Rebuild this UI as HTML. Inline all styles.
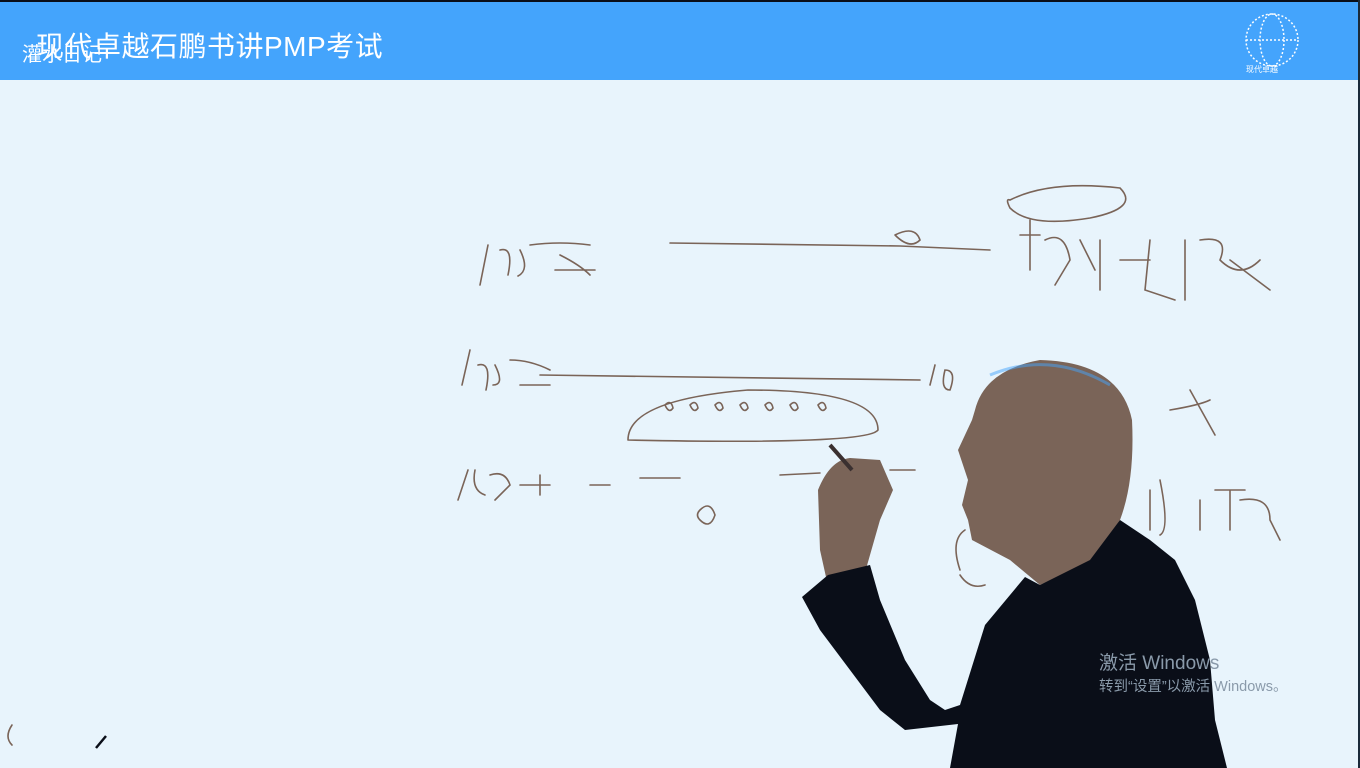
<!DOCTYPE html>
<html><head><meta charset="utf-8"><style>
body{margin:0;width:1360px;height:768px;overflow:hidden;background:#e8f4fc;font-family:"Liberation Sans","Noto Sans CJK SC",sans-serif;position:relative}
.top{position:absolute;left:0;top:0;width:1360px;height:2px;background:#0a0e18}
.hdr{position:absolute;left:0;top:2px;width:1358px;height:78px;background:#44a4fc}
.rs{position:absolute;right:0;top:0;width:2px;height:768px;background:#1a2a3a}
.t{position:absolute;left:36px;top:25px;color:#fff;font-size:28px;letter-spacing:0.5px}
.t2{position:absolute;left:22px;top:38px;color:#fff;font-size:20px}
.wm{position:absolute;left:1099px;top:648px;color:#8a9aaa;font-size:19px}
.wm2{position:absolute;left:1099px;top:675px;color:#8a9aaa;font-size:14.5px}
</style></head><body>
<div class="top"></div><div class="hdr"></div><div class="rs"></div>
<div class="t">现代卓越石鹏书讲PMP考试</div>
<div class="t2">灌水日记</div>
<svg style="position:absolute;left:0;top:0" width="1360" height="768">
<g fill="none" stroke="#fff" stroke-width="1.5">
<circle cx="1272" cy="40" r="26" stroke-dasharray="2 2"/>
<ellipse cx="1272" cy="40" rx="12" ry="26" stroke-dasharray="2 2"/>
<line x1="1246" y1="40" x2="1298" y2="40" stroke-dasharray="2 2"/>
</g>
<text x="1246" y="72" fill="#fff" font-size="8">现代卓越</text>
<g fill="none" stroke="#7a6458" stroke-width="1.6" stroke-linecap="round">
<path d="M480 285 L488 245 M500 250 q14 -4 8 25 M520 250 q10 20 -2 26 M530 245 q30 -4 60 0 M560 255 q20 10 30 20 M555 270 l40 0"/>
<path d="M670 243 L900 246 L990 250"/>
<path d="M895 235 q20 -10 25 5 q-10 10 -25 -5"/>
<path d="M1010 200 q40 -20 110 -12 q20 20 -30 30 q-60 10 -80 -10 q-5 -10 0 -8"/>
<path d="M1020 235 l20 0 M1030 220 l0 50 M1045 240 q20 -10 25 20 l-15 25 M1080 240 l15 30 M1100 240 l0 50 M1120 260 l30 0 M1150 240 l-5 50 l30 10 M1185 240 l0 60 M1200 240 q30 -5 20 20 q20 20 40 0 M1230 260 l40 30"/>
<path d="M462 385 L470 350 M478 365 q14 -4 8 25 M495 365 q10 20 -2 20 M510 360 q20 0 40 10 M520 385 l30 0"/>
<path d="M540 375 L920 380"/>
<path d="M930 385 l5 -20 M945 370 q12 0 5 20 q-10 0 -5 -20"/>
<path d="M1190 390 l25 45 M1170 410 q30 -5 40 -10"/>
<path d="M628 440 q0 -40 120 -50 q130 0 130 40 q-10 15 -250 10"/>
<path d="M665 405 q6 -6 8 3 q-4 6 -8 -3 M690 405 q6 -6 8 3 q-4 6 -8 -3 M715 405 q6 -6 8 3 q-4 6 -8 -3 M740 405 q6 -6 8 3 q-4 6 -8 -3 M765 405 q6 -6 8 3 q-4 6 -8 -3 M790 405 q6 -6 8 3 q-4 6 -8 -3 M818 405 q6 -6 8 3 q-4 6 -8 -3"/>
<path d="M458 500 L468 470 M475 470 q-4 20 10 25 M490 475 q15 -5 20 10 l-15 15 M520 485 l30 0 M540 475 l0 20 M590 485 l20 0 M640 478 l40 0 M780 475 l40 -2 M890 470 l25 0"/>
<path d="M700 510 q10 -10 15 5 q-5 15 -15 5 q-5 -5 0 -10"/>
<path d="M1150 490 l0 40 M1160 480 q10 50 0 55 M1200 500 l0 30 M1215 490 l30 0 M1230 490 l0 40 M1240 500 q30 -5 30 20 l10 20"/>
<path d="M960 570 q-10 -30 5 -40 M960 575 q10 15 25 10"/>
<path d="M12 745 q-8 -8 0 -20"/>
</g>
<path d="M96 748 L106 736" stroke="#0a0e18" stroke-width="2.5"/>
<path d="M975 410 Q985 370 1040 360 Q1120 362 1132 420 Q1135 480 1120 520 L1095 560 L1040 585 L1010 560 L972 540 L968 520 L962 505 L968 480 L958 450 L972 420 Z" fill="#7a6458"/>
<path d="M990 375 Q1050 350 1110 385" stroke="#44a4fc" stroke-width="3" fill="none" opacity="0.5"/>
<path d="M818 490 Q830 460 850 458 L880 460 L893 490 L880 520 L870 555 L860 590 L830 595 L820 550 Z" fill="#7a6458"/>
<path d="M830 445 L852 470" stroke="#3a3030" stroke-width="4"/>
<path d="M802 597 L828 575 L870 565 L880 600 L905 660 L930 700 L945 710 L960 705 L985 625 L1025 577 L1040 585 L1090 560 L1120 520 L1150 540 L1175 560 L1195 600 L1210 660 L1215 720 L1227 768 L950 768 L958 724 L905 730 L880 710 L850 670 L820 630 Z" fill="#0a0e18"/>
</svg>
<div class="wm">激活 Windows</div>
<div class="wm2">转到“设置”以激活 Windows。</div>
</body></html>
